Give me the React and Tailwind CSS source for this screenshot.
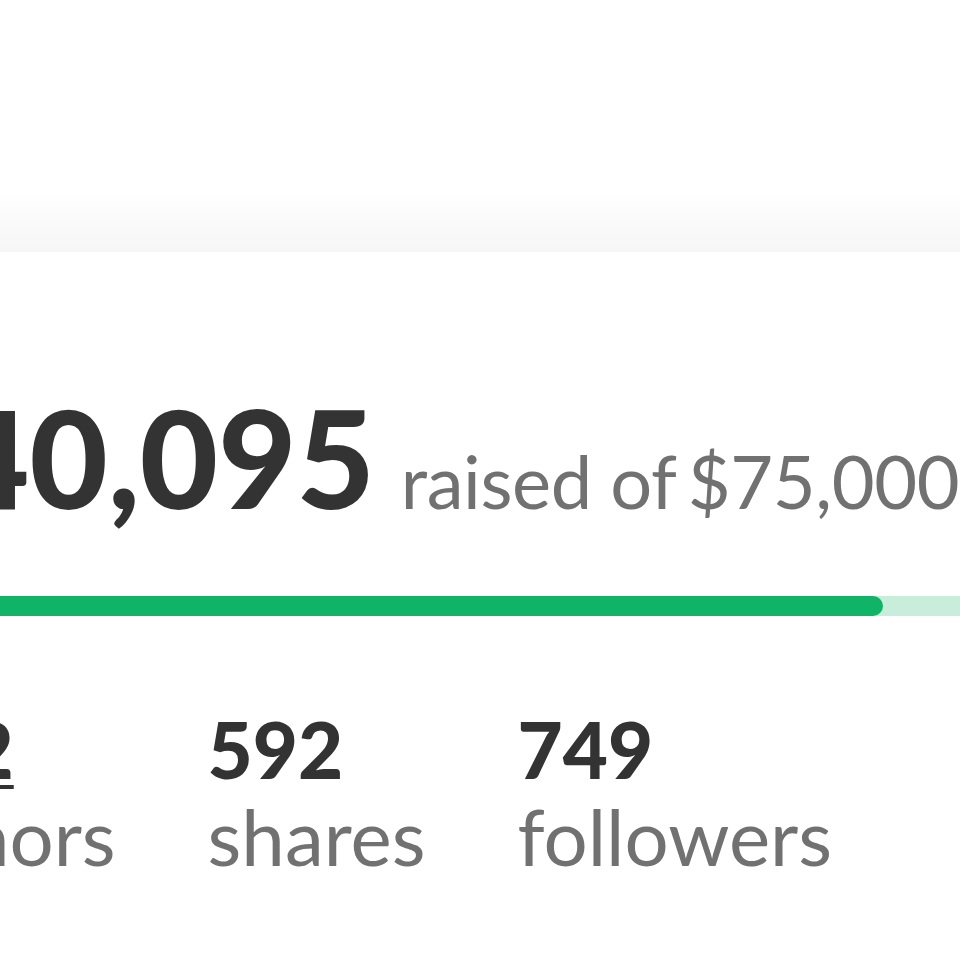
import React from 'react';

const stats = [
  { value: '512', label: 'donors', link: true },
  { value: '592', label: 'shares' },
  { value: '749', label: 'followers' },
];

const App = () => {
  return (
    <div className="w-[960px] h-[960px] overflow-hidden bg-white font-['Lato','Liberation_Sans',sans-serif]">
      <div className="h-[190px]" />
      <div className="h-[62px] bg-gradient-to-b from-white to-[#f6f6f6]" />

      <div className="ml-[-127px] w-[1200px]">
        <div className="mt-[138px] flex items-baseline whitespace-nowrap">
          <span className="text-[135px] leading-none font-black text-[#333333]">$40,095</span>
          <span className="ml-[26px] text-[74px] leading-none tracking-[-0.4px] text-[#717171]">
            raised of <span className="ml-[-6px]">$75,000</span>
          </span>
        </div>

        <div className="mt-[71px] h-5 w-[1200px] rounded-full bg-[#c8eedb]">
          <div className="h-5 w-[1010px] rounded-full bg-[#0fb467]" />
        </div>

        <div className="mt-[90px] ml-[5px] flex gap-[92px]">
          {stats.map((s) => (
            <div key={s.label} className="flex flex-col text-[78px] leading-[87px]">
              <span
                className={
                  s.link
                    ? 'font-black text-[#333333] underline decoration-[4px] underline-offset-[6px] w-fit'
                    : 'font-black text-[#333333]'
                }
              >
                {s.value}
              </span>
              <span className="text-[#717171]">{s.label}</span>
            </div>
          ))}
        </div>
      </div>
    </div>
  );
};

export default App;
